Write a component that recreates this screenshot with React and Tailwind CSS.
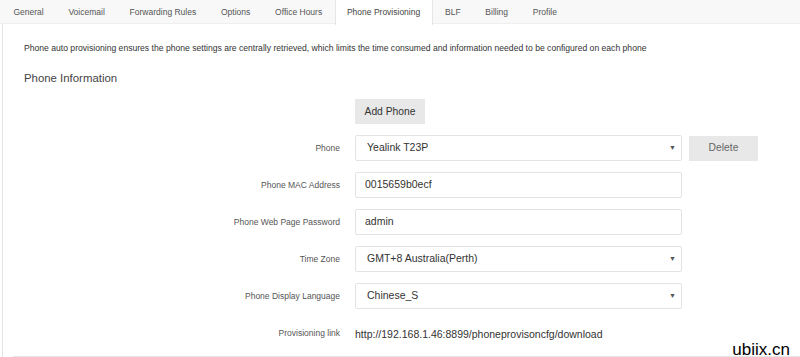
import React from "react";

const TABS = ["General", "Voicemail", "Forwarding Rules", "Options", "Office Hours", "Phone Provisioning", "BLF", "Billing", "Profile"];
const ACTIVE = "Phone Provisioning";

function Caret() {
  return <span className="absolute right-[5px] top-1/2 -translate-y-1/2 text-[7px] text-[#555]">▼</span>;
}

function Row({ label, children, extra }) {
  return (
    <div className="flex items-center h-[26px]">
      <div className="w-[337px] text-right text-[8.5px] text-[#555]">{label}</div>
      <div className="ml-[15px] w-[327px]">{children}</div>
      {extra}
    </div>
  );
}

function Field({ value, select }) {
  return (
    <div className="relative h-[26px] border border-[#e3e3e3] rounded-[2px] bg-white flex items-center pl-[9px] text-[10.5px] text-[#333]">
      {select ? <span className="pl-[2px]">{value}</span> : value}
      {select && <Caret />}
    </div>
  );
}

export default function App() {
  return (
    <div className="relative w-[800px] h-[357px] overflow-hidden bg-white font-['Liberation_Sans',Arial,sans-serif]">
      <div className="flex h-[24px] bg-[#f8f8f8] border-b border-[#efefef] pl-[1px]">
        {TABS.map((t) => (
          <div
            key={t}
            className={
              t === ACTIVE
                ? "px-[11.4px] leading-[24px] text-[8.5px] text-[#444] bg-white border-x border-[#e6e6e6] h-[25px]"
                : "px-[12.4px] leading-[24px] text-[8.5px] text-[#555]"
            }
          >
            {t}
          </div>
        ))}
      </div>
      <div className="ml-[2px] border-l border-[#e4e4e4] h-[333px] flex flex-col">
        <p className="pl-[21px] pt-[18px] text-[8.6px] text-[#333]">
          Phone auto provisioning ensures the phone settings are centrally retrieved, which limits the time consumed and information needed to be configured on each phone
        </p>
        <h2 className="pl-[21px] mt-[15px] text-[11.4px] text-[#444]">Phone Information</h2>
        <div className="flex flex-col gap-[11px] mt-[12px]">
          <div className="flex h-[25px]">
            <div className="ml-[352px] w-[70px] h-[25px] bg-[#e8e8e8] flex items-center justify-center text-[10.3px] text-[#333]">Add Phone</div>
          </div>
          <Row
            label="Phone"
            extra={
              <div className="ml-[7px] w-[69px] h-[25px] bg-[#e8e8e8] flex items-center justify-center text-[10.3px] text-[#666]">Delete</div>
            }
          >
            <Field value="Yealink T23P" select />
          </Row>
          <Row label="Phone MAC Address"><Field value="0015659b0ecf" /></Row>
          <Row label="Phone Web Page Password"><Field value="admin" /></Row>
          <Row label="Time Zone"><Field value="GMT+8 Australia(Perth)" select /></Row>
          <Row label="Phone Display Language"><Field value="Chinese_S" select /></Row>
          <Row label="Provisioning link">
            <span className="text-[10.5px] text-[#333]">http://192.168.1.46:8899/phoneprovisoncfg/download</span>
          </Row>
        </div>
        <div className="mt-auto ml-[10px] border-b border-[#e6e6e6]" />
      </div>
      <div className="absolute right-[10px] bottom-[-5px] text-[17px] text-black font-['Liberation_Sans',Arial,sans-serif]">ubiix.cn</div>
    </div>
  );
}
